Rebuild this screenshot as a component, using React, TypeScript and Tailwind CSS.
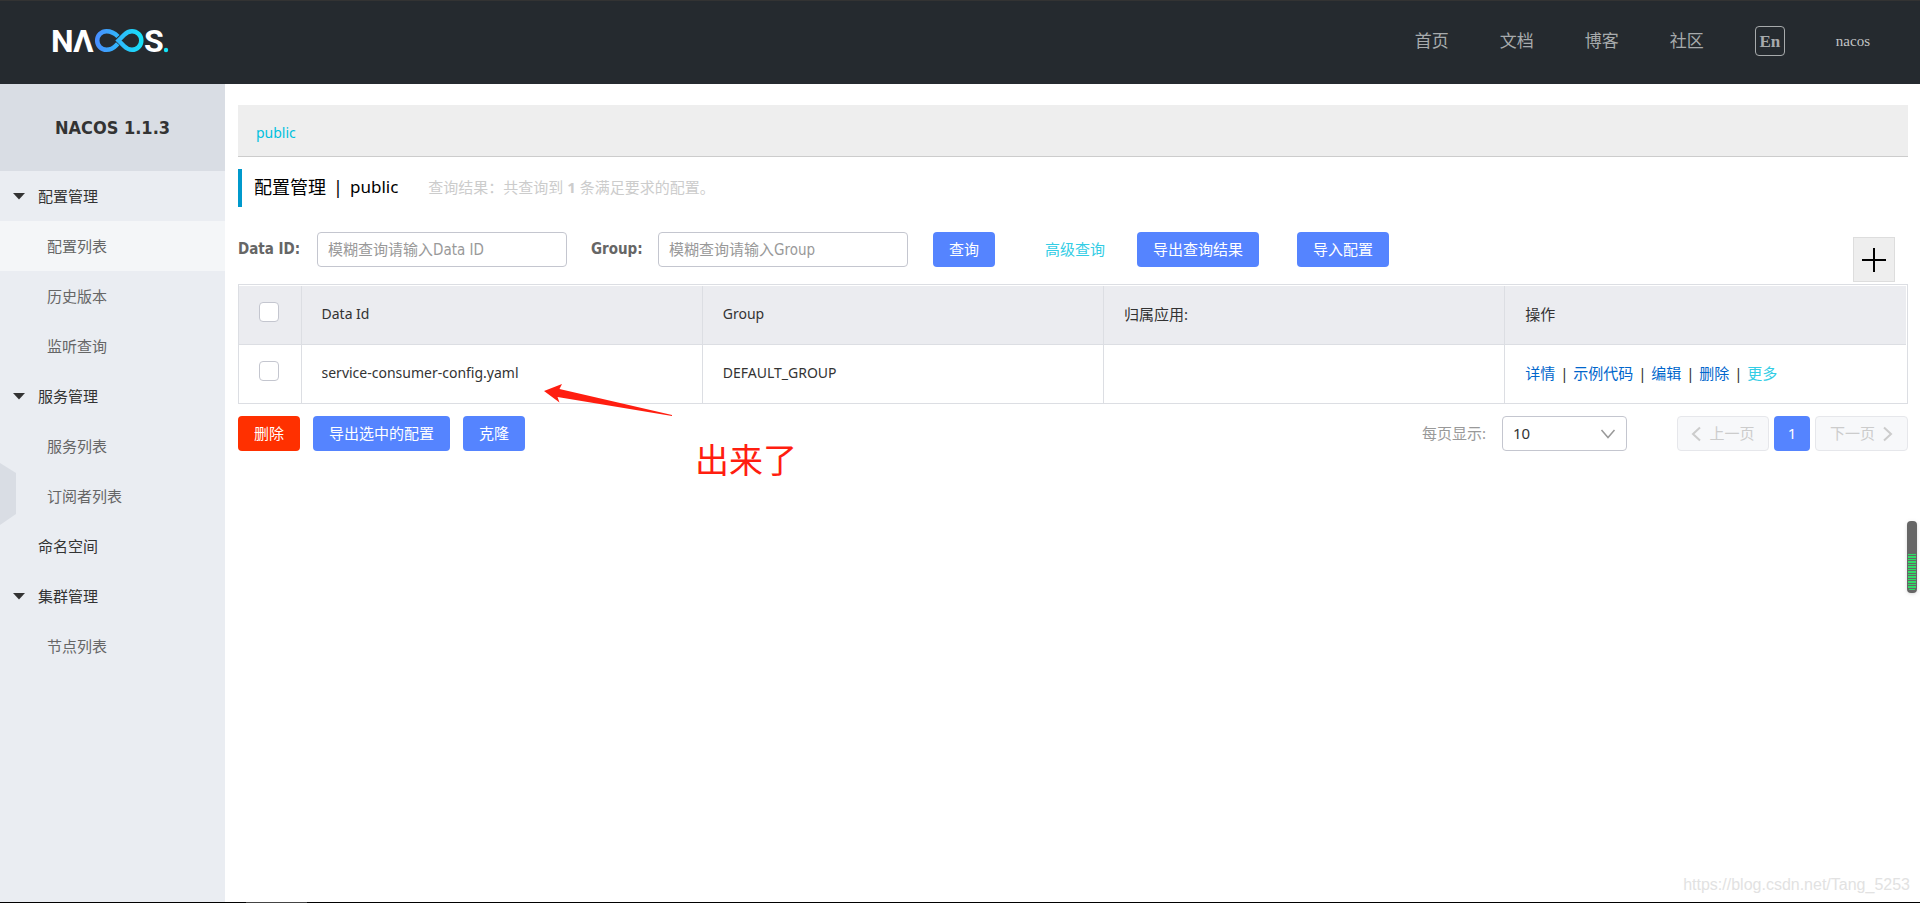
import React from "react";
import { clsx } from "clsx";

interface MenuItem {
  title: string;
  level: 1 | 2;
  expandable?: boolean;
  active?: boolean;
}

const navLinks = ["首页", "文档", "博客", "社区"];

const menuItems: MenuItem[] = [
  { title: "配置管理", level: 1, expandable: true },
  { title: "配置列表", level: 2, active: true },
  { title: "历史版本", level: 2 },
  { title: "监听查询", level: 2 },
  { title: "服务管理", level: 1, expandable: true },
  { title: "服务列表", level: 2 },
  { title: "订阅者列表", level: 2 },
  { title: "命名空间", level: 1 },
  { title: "集群管理", level: 1, expandable: true },
  { title: "节点列表", level: 2 },
];

const configs = [{ dataId: "service-consumer-config.yaml", group: "DEFAULT_GROUP", app: "" }];

const rowActions = ["详情", "示例代码", "编辑", "删除"];

const Logo = () => (
  <svg width="126" height="44" viewBox="-4 -8 126 44" role="img" aria-label="NACOS">
    <defs>
      <linearGradient id="loop" x1="43" y1="0" x2="92" y2="0" gradientUnits="userSpaceOnUse">
        <stop offset="0" stopColor="#4a8cff" />
        <stop offset="1" stopColor="#14e4f8" />
      </linearGradient>
    </defs>
    <g fill="#fff" fontFamily="Roboto, sans-serif" fontSize="32" fontWeight="700">
      <text x="-1" y="25">N</text>
      <text x="21" y="25">Λ</text>
      <text x="92" y="25">S</text>
    </g>
    <g fill="none" stroke="url(#loop)" strokeWidth="4.5">
      <path d="M66 9.500C62 5.500 58.500 4.200 54.500 4.200a9.300 9.300 0 0 0 0 18.600c4 0 7-1.600 9.500-4.300l1.700-1.800" />
      <path d="M66.500 13.500l5.500-5.500c2.500-2.500 5-3.800 8-3.800a9.300 9.300 0 0 1 0 18.600c-3 0-5.500-1.300-8-3.800z" />
    </g>
    <circle cx="114" cy="23" r="2.200" fill="#14e4f8" />
  </svg>
);

interface ButtonProps {
  children: React.ReactNode;
  danger?: boolean;
  className?: string;
}

const Button = ({ children, danger, className }: ButtonProps) => (
  <button
    type="button"
    className={clsx(
      "h-[35px] shrink-0 rounded px-4 text-[15px] whitespace-nowrap text-white",
      danger ? "bg-[#ff3000]" : "bg-[#5584ff]",
      className
    )}
  >
    {children}
  </button>
);

const Checkbox = ({ label }: { label: string }) => (
  <input
    type="checkbox"
    aria-label={label}
    className="block size-5 appearance-none rounded border border-[#c4c6cf] bg-white checked:bg-[#5584ff]"
  />
);

const Header = () => (
  <header className="flex h-[84px] items-center border-t border-[#333] bg-[#252a2f] pr-[50px] pb-[3px] pl-12 text-[#a7aaac]">
    <a href="#">
      <Logo />
    </a>
    <nav className="ml-auto flex items-center gap-[51px] text-[17px]">
      {navLinks.map((link) => (
        <a key={link} href="#">
          {link}
        </a>
      ))}
      <button
        type="button"
        className="size-[30px] rounded-sm border border-[#a7aaac] font-['Liberation_Serif',serif] text-[17px] leading-none font-bold"
      >
        En
      </button>
      <a href="#" className="font-['Liberation_Serif',serif] text-[15px] text-[#c3c5c6]">
        nacos
      </a>
    </nav>
  </header>
);

const Sidebar = () => (
  <aside className="relative w-[225px] shrink-0 bg-[#eaedf2] text-[15px]">
    <h1 className="flex h-[87px] items-center justify-center bg-[#d9dde4] font-['DejaVu_Sans_Condensed',sans-serif] text-[18px] font-bold text-[#333]">
      NACOS 1.1.3
    </h1>
    <ul>
      {menuItems.map((item) => (
        <li key={item.title}>
          <a
            href="#"
            className={clsx(
              "flex h-[50px] items-center",
              item.level === 1 ? "pl-[13px] text-[#333]" : "pl-[47px] text-[#666]",
              item.active && "bg-[#f4f6f8]"
            )}
          >
            {item.level === 1 && (
              <span className="w-[25px]">
                {item.expandable && (
                  <svg width="12" height="7" viewBox="0 0 12 7">
                    <path d="M0 0h12L6 6.500z" fill="#333" />
                  </svg>
                )}
              </span>
            )}
            {item.title}
          </a>
        </li>
      ))}
    </ul>
    {/* Collapse handle */}
    <svg className="absolute top-[379px] left-0" width="16" height="62" viewBox="0 0 16 62">
      <path d="M0 0l16 10v41L0 62z" fill="#d9dde4" />
    </svg>
  </aside>
);

const SearchBar = () => (
  <form className="mt-[25px] flex h-[50px] items-start text-[15px]">
    <label
      htmlFor="dataId"
      className="w-[79px] font-['DejaVu_Sans_Condensed',sans-serif] leading-[35px] font-bold text-[#666]"
    >
      Data ID:
    </label>
    <input
      id="dataId"
      placeholder="模糊查询请输入Data ID"
      className="h-[35px] w-[250px] rounded border border-[#c4c6cf] px-2.5 font-['DejaVu_Sans_Condensed','Noto_Sans_CJK_SC',sans-serif] placeholder:text-[#999]"
    />
    <label
      htmlFor="group"
      className="ml-6 w-[67px] font-['DejaVu_Sans_Condensed',sans-serif] leading-[35px] font-bold text-[#666]"
    >
      Group:
    </label>
    <input
      id="group"
      placeholder="模糊查询请输入Group"
      className="h-[35px] w-[250px] rounded border border-[#c4c6cf] px-2.5 font-['DejaVu_Sans_Condensed','Noto_Sans_CJK_SC',sans-serif] placeholder:text-[#999]"
    />
    <Button className="ml-[25px]">查询</Button>
    <a href="#" className="ml-[50px] leading-[35px] text-[#33cde5]">
      高级查询
    </a>
    <Button className="ml-8">导出查询结果</Button>
    <Button className="ml-[38px]">导入配置</Button>
    <button
      type="button"
      aria-label="新建配置"
      className="mr-[13px] ml-auto flex h-[45px] w-[42px] items-center justify-center self-end border border-[#ddd] bg-[#eee]"
    >
      <svg width="26" height="26" viewBox="0 0 26 26" stroke="#000" strokeWidth="2">
        <path d="M1 13h24M13 1v24" />
      </svg>
    </button>
  </form>
);

const ConfigTable = () => (
  <div className="mt-0.5 border border-[#dcdee3] pt-px pr-px">
    <table className="w-full table-fixed text-left text-[15px] text-[#333]">
      <thead>
        <tr className="h-[58px] border-b border-[#dcdee3] bg-[#ebecf0]">
          <th className="w-[62px] border-r border-[#dcdee3] pb-1.5 pl-5">
            <Checkbox label="全选" />
          </th>
          <th className="border-r border-[#dcdee3] pb-0.5 pl-5 text-[14px] font-normal">Data Id</th>
          <th className="border-r border-[#dcdee3] pb-0.5 pl-5 text-[14px] font-normal">Group</th>
          <th className="border-r border-[#dcdee3] pb-0.5 pl-5 font-normal">归属应用:</th>
          <th className="pb-0.5 pl-5 font-normal">操作</th>
        </tr>
      </thead>
      <tbody>
        {configs.map((config) => (
          <tr key={config.dataId} className="h-[59px]">
            <td className="border-r border-[#dcdee3] pb-1.5 pl-5">
              <Checkbox label={config.dataId} />
            </td>
            <td className="border-r border-[#dcdee3] pb-0.5 pl-5 text-[14px]">{config.dataId}</td>
            <td className="border-r border-[#dcdee3] pb-0.5 pl-5 text-[14px]">{config.group}</td>
            <td className="border-r border-[#dcdee3] pb-0.5 pl-5 text-[14px]">{config.app}</td>
            <td className="pb-0.5 pl-5 whitespace-nowrap">
              {rowActions.map((action) => (
                <React.Fragment key={action}>
                  <a href="#" className="text-[#0066cc]">
                    {action}
                  </a>
                  <span className="inline-block w-[18px] text-center">|</span>
                </React.Fragment>
              ))}
              <a href="#" className="text-[#33cde5]">
                更多
              </a>
            </td>
          </tr>
        ))}
      </tbody>
    </table>
  </div>
);

const Footer = () => (
  <div className="mt-3 flex items-center text-[15px]">
    <Button danger>删除</Button>
    <Button className="ml-[13px]">导出选中的配置</Button>
    <Button className="ml-[13px]">克隆</Button>

    <label htmlFor="pageSize" className="ml-auto w-20 text-[#999]">
      每页显示:
    </label>
    <div className="relative mr-[50px]">
      <select
        id="pageSize"
        defaultValue="10"
        className="h-[35px] w-[125px] appearance-none rounded border border-[#c4c6cf] bg-white pl-2.5 text-[#333]"
      >
        <option>10</option>
        <option>20</option>
        <option>50</option>
      </select>
      <svg
        className="pointer-events-none absolute top-[13px] right-[11px]"
        width="16"
        height="10"
        viewBox="0 0 16 10"
        fill="none"
        stroke="#999"
        strokeWidth="1.500"
      >
        <path d="M1.500 1L8 8.500 14.500 1" />
      </svg>
    </div>
    <div className="flex gap-[5px]">
      <button
        type="button"
        disabled
        className="flex h-[35px] w-[92px] items-center justify-center gap-2 rounded border border-[#e6e7eb] bg-[#f7f8fa] text-[#ccc]"
      >
        <svg width="10" height="16" viewBox="0 0 10 16" fill="none" stroke="#ccc" strokeWidth="2">
          <path d="M9 1.500L2 8l7 6.500" />
        </svg>
        上一页
      </button>
      <button type="button" className="h-[35px] w-9 rounded bg-[#5584ff] text-white">
        1
      </button>
      <button
        type="button"
        disabled
        className="flex h-[35px] w-[93px] items-center justify-center gap-2 rounded border border-[#e6e7eb] bg-[#f7f8fa] text-[#ccc]"
      >
        下一页
        <svg width="10" height="16" viewBox="0 0 10 16" fill="none" stroke="#ccc" strokeWidth="2">
          <path d="M1 1.500L8 8l-7 6.500" />
        </svg>
      </button>
    </div>
  </div>
);

const meterSteps = [33, 38, 43, 48, 53, 58, 63];

const App = () => (
  <div className="relative flex min-h-screen flex-col bg-white font-['Noto_Sans','Noto_Sans_CJK_SC',sans-serif]">
    <Header />
    <div className="flex flex-1">
      <Sidebar />
      <main className="min-w-0 flex-1 pt-[21px] pr-3 pl-[13px]">
        <div className="flex h-[52px] items-center border-b border-[#ccc] bg-[#eee] pt-1 pl-[18px] text-[14px]">
          <a href="#" className="text-[#00c1de]">
            public
          </a>
        </div>
        <h2 className="mt-3 flex h-[38px] items-center border-l-4 border-[#09c] pb-0.5 pl-3 text-[18px] text-black">
          <span>配置管理</span>
          <span className="w-6 text-center">|</span>
          <span className="text-[17px]">public</span>
          <span className="ml-[30px] text-[15px] text-[#ccc]">
            查询结果：共查询到 <strong>1</strong> 条满足要求的配置。
          </span>
        </h2>
        <SearchBar />
        <ConfigTable />
        <Footer />
      </main>
    </div>
    <div className="h-px bg-black pl-[246px]">
      <div className="h-px w-[61px] bg-[#444]" />
    </div>

    {/* Red note drawn over the table */}
    <svg className="pointer-events-none absolute top-[383px] left-[544px]" width="129" height="34" viewBox="0 0 129 34">
      <path d="M0 8L18 1l-2.500 5L128 32v1L13.500 14l2 5.500z" fill="#ff1e10" />
    </svg>
    <p className="pointer-events-none absolute top-[436px] left-[695px] text-[34px] leading-[48px] text-[#ff1e10]">
      出来了
    </p>

    {/* Floating level meter */}
    <svg className="absolute top-[521px] right-[3px] drop-shadow" width="10" height="72" viewBox="0 0 10 72">
      <rect width="10" height="72" rx="4" fill="#666" />
      {meterSteps.map((y) => (
        <g key={y} fill="#2fdc66">
          <rect x="1" y={y} width="8" height="1" />
          <rect x="1" y={y + 2} width="8" height="2" />
        </g>
      ))}
      <rect x="2" y="68" width="6" height="1" fill="#2fdc66" />
    </svg>
    <p className="pointer-events-none absolute right-2.5 bottom-1.5 font-['Liberation_Sans',sans-serif] text-[16px] text-[#e2e2e2]">
      https://blog.csdn.net/Tang_5253
    </p>
  </div>
);

export default App;
